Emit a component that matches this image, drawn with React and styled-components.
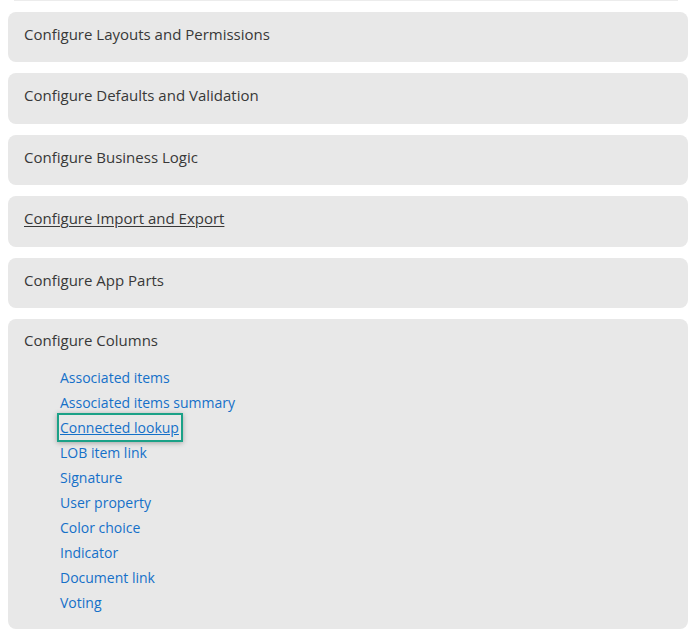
import styled, { createGlobalStyle } from 'styled-components';

const GlobalStyle = createGlobalStyle`
  body {
    margin: 0;
    background: #fff;
    font-family: 'Open Sans', 'Noto Sans', sans-serif;
  }
`;

const sections = [
  { title: 'Configure Layouts and Permissions' },
  { title: 'Configure Defaults and Validation' },
  { title: 'Configure Business Logic' },
  { title: 'Configure Import and Export', hovered: true },
  { title: 'Configure App Parts' },
];

const columnLinks = [
  'Associated items',
  'Associated items summary',
  'Connected lookup',
  'LOB item link',
  'Signature',
  'User property',
  'Color choice',
  'Indicator',
  'Document link',
  'Voting',
];

export default () => (
  <Page>
    <GlobalStyle />
    <PrevEdge />
    {sections.map((s) => (
      <Panel key={s.title}>
        <Header $hovered={s.hovered}>{s.title}</Header>
      </Panel>
    ))}
    <Panel $expanded>
      <Header $expanded>Configure Columns</Header>
      <LinkList>
        {columnLinks.map((l) => (
          <li key={l}>
            <ColumnLink href='#' $focused={l === 'Connected lookup'}>
              {l}
            </ColumnLink>
          </li>
        ))}
      </LinkList>
    </Panel>
  </Page>
);

const Page = styled.div`
  padding: 0 4px 0 8px;
  display: flex;
  flex-direction: column;
  gap: 11px;
`;

const PrevEdge = styled.div`
  height: 1px;
  margin: 0 10px 0 6px;
  background: #ececec;
`;

const Panel = styled.section`
  background: #e8e8e8;
  border-radius: 8px;
  padding: 0 16px ${(p) => (p.$expanded ? '14px' : '0')};
`;

const Header = styled.div`
  height: ${(p) => (p.$expanded ? '45px' : '50.4px')};
  line-height: ${(p) => (p.$expanded ? '42px' : '44px')};
  font-size: 15px;
  color: #383838;
  text-decoration: ${(p) => (p.$hovered ? 'underline' : 'none')};
  text-underline-offset: 2px;
`;

const LinkList = styled.ul`
  list-style: none;
  margin: 0;
  padding: 1px 0 0 36px;
  display: flex;
  flex-direction: column;
`;

const ColumnLink = styled.a`
  display: inline-block;
  line-height: 25px;
  font-size: 14px;
  color: #1570c8;
  text-decoration: ${(p) => (p.$focused ? 'underline' : 'none')};
  ${(p) =>
    p.$focused &&
    `
    outline: 2px solid #1ba187;
    box-shadow: 0 0 0 2px rgba(27, 161, 135, 0.35), 0 1px 5px 2px rgba(0, 0, 0, 0.3);
    padding: 0 2px 0 1px;
    margin-left: -1px;
  `}
`;
